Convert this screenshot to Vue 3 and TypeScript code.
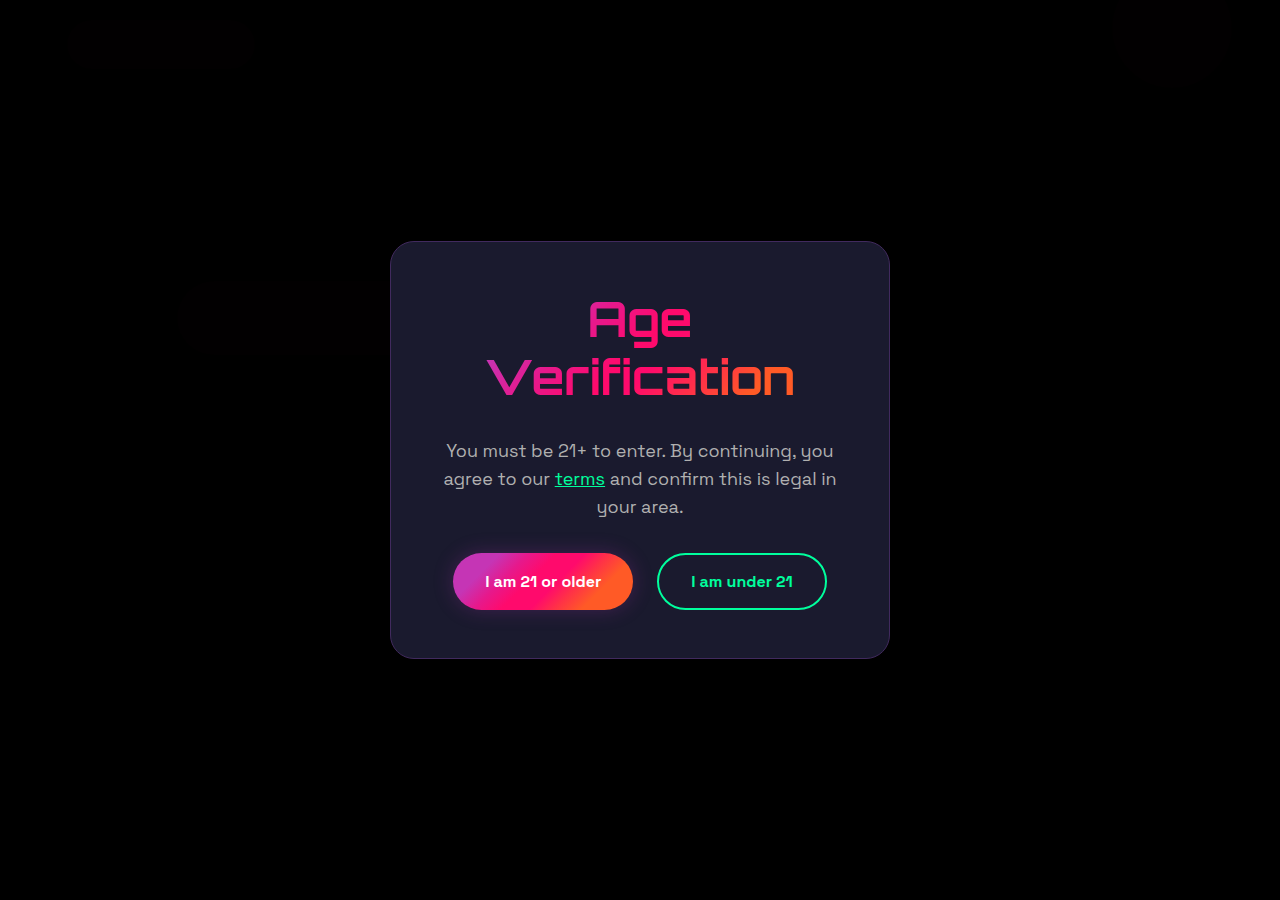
<script setup lang="ts">
import { ref } from 'vue'

type Answer = 'adult' | 'minor'
const answer = ref<Answer | null>(null)
</script>

<template>
  <main class="backdrop">
    <span class="glow glow-logo"></span>
    <span class="glow glow-corner"></span>
    <span class="glow glow-hero"></span>
    <section class="card" role="dialog" aria-modal="true" aria-labelledby="gate-title" :data-answer="answer">
      <h1 id="gate-title" class="title">Age Verification</h1>
      <p class="copy">
        You must be 21+ to enter. By continuing, you agree to our
        <a href="#terms">terms</a> and confirm this is legal in your area.
      </p>
      <div class="actions">
        <button type="button" class="btn primary" @click="answer = 'adult'">I am 21 or older</button>
        <button type="button" class="btn outline" @click="answer = 'minor'">I am under 21</button>
      </div>
    </section>
  </main>
</template>

<style>
body {
  background: #000;
}
</style>

<style scoped>
.backdrop {
  position: relative;
  display: flex;
  align-items: center;
  justify-content: center;
  box-sizing: border-box;
  min-height: 100vh;
  overflow: hidden;
  background: #000;
  font-family: 'Space Grotesk', 'Open Sans', 'Liberation Sans', sans-serif;
}

.glow {
  position: absolute;
  border-radius: 40px;
  background: #020001;
}

.glow-logo {
  top: 20px;
  left: 67px;
  width: 188px;
  height: 49px;
}

.glow-corner {
  top: -32px;
  right: 48px;
  width: 120px;
  height: 120px;
  border-radius: 60px;
}

.glow-hero {
  top: 281px;
  left: 177px;
  width: 640px;
  height: 74px;
}

.card {
  position: relative;
  box-sizing: border-box;
  width: 100%;
  max-width: 500px;
  padding: 48px;
  border: 1px solid #412a5e;
  border-radius: 24px;
  background: #1a1a2e;
  text-align: center;
}

.title {
  margin: 0 0 32px;
  background: linear-gradient(135deg, #c535b5 22%, #e6198c 36%, #ff0a6c 49%, #ff0a6c 56%, #ff3048 68%, #ff5a26 80%);
  background-clip: text;
  -webkit-background-clip: text;
  color: transparent;
  font-family: Orbitron, 'DejaVu Sans', sans-serif;
  font-size: 48px;
  font-weight: 700;
  line-height: 1.2;
}

.copy {
  margin: 0 0 32px;
  color: #b0b0b0;
  font-size: 18px;
  line-height: 28px;
}

.copy a {
  color: #00ff9d;
}

.actions {
  display: flex;
  flex-wrap: wrap;
  justify-content: center;
  gap: 24px;
}

.btn {
  box-sizing: border-box;
  min-height: 57px;
  padding: 16px 32px;
  border: 0;
  border-radius: 50px;
  font-family: 'Space Grotesk', Inter, 'Liberation Sans', sans-serif;
  font-size: 16px;
  font-weight: 600;
  line-height: 21px;
  cursor: pointer;
}

.primary {
  background: linear-gradient(135deg, #c535b5 20%, #e6198c 32%, #ff0a6c 44%, #ff0a6c 56%, #ff3048 66%, #ff5a26 78%);
  box-shadow: 0 0 20px rgba(157, 50, 160, 0.3);
  color: #fff;
}

.outline {
  border: 2px solid #00ff9d;
  background: transparent;
  color: #00ff9d;
}
</style>
